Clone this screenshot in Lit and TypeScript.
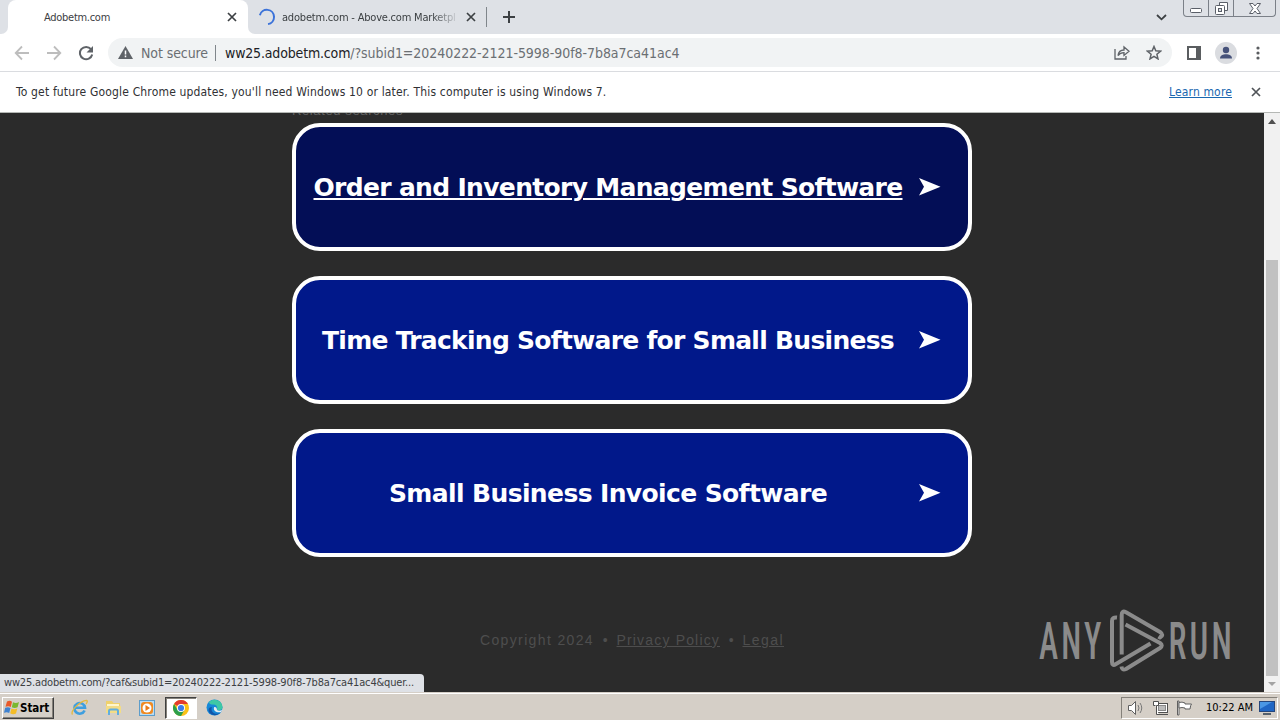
import { LitElement, html, css } from "lit";
import { customElement } from "lit/decorators.js";

const cross = html`<svg width="10" height="10" viewBox="0 0 10 10"><path d="M1 1l8 8M9 1l-8 8" fill="none" stroke="currentColor" stroke-width="1.7"/></svg>`;

const linkCard = (cls: string, text: string) => html`
  <a class="card ${cls}"><span class="label"><span class="l-${cls}">${text}</span></span>
    <svg class="arrow" width="22" height="18" viewBox="0 0 22 18"><path d="M0 0L21.500 8.700 0 17.500 5 8.700z" fill="#fff"/></svg>
  </a>`;

@customElement("app-root")
export class AppRoot extends LitElement {
  static styles = css`
    :host { display: flex; flex-direction: column; width: 1280px; height: 720px; overflow: hidden; position: relative;
      font-family: "DejaVu Sans Condensed", "DejaVu Sans", sans-serif; font-stretch: condensed; color: #3c4043; background: #fff; white-space: nowrap; }
    * { box-sizing: border-box; }
    svg { display: block; flex: none; }
    .tabs { height: 34px; flex: none; display: flex; background: #dee1e6; font-size: 11px; }
    .lead { width: 8px; background: #fff; }
    .lead i { display: block; width: 8px; height: 34px; background: #dee1e6; border-bottom-right-radius: 7px; }
    .tab { display: flex; align-items: center; height: 34px; }
    .tab.on { width: 240px; background: #fff; border-radius: 8px 8px 0 0; padding: 0 11px 0 36px; justify-content: space-between; }
    .t1 { letter-spacing: -.281px; } .t2 { letter-spacing: -.2px; }
    .trail { width: 8px; background: #fff; }
    .trail i { display: block; width: 8px; height: 34px; background: #dee1e6; border-bottom-left-radius: 7px; }
    .tab.off { width: 230px; padding: 0 10px 0 2px; gap: 6px; }
    .clip { width: 178px; overflow: hidden; -webkit-mask-image: linear-gradient(90deg, #000 150px, transparent 178px); }
    .tab.off .x { margin-left: auto; }
    .sep { width: 1px; height: 20px; margin: 7px 16px 0 0; background: #80868b; }
    .plus { margin-top: 11px; }
    .chev { margin: 14px 16px 0 auto; }
    .winbtns { display: flex; width: 93px; height: 17px; margin-right: 4px; border: 1px solid #7b8088; border-top: 0; border-radius: 0 0 4px 4px; }
    .winbtns span { display: flex; justify-content: center; align-items: center; border-right: 1px solid #7b8088; }
    .w1 { width: 25px; } .w2 { width: 25px; }
    .winbtns .w3 { flex: 1; border: 0; }
    .bar { height: 38px; flex: none; display: flex; align-items: center; border-bottom: 1px solid #dadce0; padding: 0 14px; }
    .reload { margin-left: 16px; }
    .fwd { margin-left: 16px; }
    .omni { display: flex; align-items: center; width: 1064px; height: 29px; margin-left: 14px; border-radius: 15px; background: #f1f3f4; font-size: 14px; padding: 0 10px; }
    .omni .warn { margin-right: 8px; }
    .ns { color: #6b6f73; letter-spacing: -.091px; }
    .vline { width: 1px; height: 16px; background: #80868b; margin: 0 9px 0 7px; }
    .host { color: #202124; letter-spacing: -.165px; } .path { color: #6b6f73; letter-spacing: -.05px; }
    .share { margin-left: auto; margin-right: 16px; }
    .side { margin-left: 15px; }
    .me { margin-left: 14px; }
    .dots { margin-left: 19px; }
    .info { height: 41px; flex: none; display: flex; align-items: center; padding: 0 19px 0 16px; border-bottom: 1px solid #b5b8b5; font-size: 12px; color: #303134; }
    .i1 { letter-spacing: .164px; }
    .more { color: #1967b0; text-decoration: underline; margin-left: auto; margin-right: 19px; letter-spacing: .15px; }
    .info svg { color: #505458; }
    .page { flex: 1; min-height: 0; display: flex; background: #2b2b2b; overflow: hidden; }
    .body { width: 1264px; display: flex; flex-direction: column; align-items: center; overflow: hidden; }
    .rel { width: 680px; height: 10px; flex: none; font: 13px/15px "Liberation Sans", sans-serif; letter-spacing: .614px; color: #626262; display: flex; align-items: flex-end; padding-bottom: 5px; }
    .card { display: flex; align-items: center; width: 680px; height: 128px; flex: none; margin-bottom: 25px; border: 4px solid #fff; border-radius: 28px; background: #01188a; color: #fff; padding: 0 27px 0 0; }
    .label { flex: 1; text-align: center; padding: 1px 0 0 1px; font: bold 25px/32px "DejaVu Sans", sans-serif; font-stretch: normal; }
    .arrow { margin-bottom: 1px; }
    .c1 { background: #030e56; }
    .l-c1 { text-decoration: underline; text-decoration-thickness: 2px; text-underline-offset: 2px; letter-spacing: -.675px; }
    .l-c2 { letter-spacing: -.729px; } .l-c3 { letter-spacing: -.618px; }
    .foot { width: 304px; display: flex; justify-content: space-between; margin-top: 48px; font: 14px/20px "Liberation Sans", sans-serif; color: #4e4e4e; }
    .f1 { letter-spacing: 1.36px; } .f2 { letter-spacing: 1.169px; } .f3 { letter-spacing: 1.447px; }
    .scroll { width: 16px; background: #f1f1f1; display: flex; flex-direction: column; align-items: center; padding: 6px 0; }
    .thumb { width: 12px; height: 416px; background: #c1c1c1; margin-top: 136px; }
    .scroll .dn { margin-top: 6px; }
    .status { position: absolute; left: 0; top: 674px; width: 424px; height: 18px; background: #dee1e6; border-top-right-radius: 4px; padding-left: 4px; font-size: 11px; line-height: 18px; letter-spacing: -.171px; }
    .mark { position: absolute; left: 1036px; top: 606px; }
    .task { height: 28px; flex: none; display: flex; align-items: center; background: #d5cfc7; border-top: 1px solid #d5cfc7; box-shadow: inset 0 1px #fff; padding: 2px 2px 0; font-size: 11px; color: #000; }
    .start { display: flex; align-items: center; width: 52px; height: 22px; border: 1px solid; border-color: #fff #404040 #404040 #fff; box-shadow: inset -1px -1px #85817a; padding-left: 1px; font: bold 11.5px "DejaVu Sans Condensed", sans-serif; font-stretch: condensed; letter-spacing: -.05px; }
    .ie { margin-left: 17px; } .ex { margin-left: 17px; } .wm { margin-left: 17px; }
    .chrome { display: flex; justify-content: center; align-items: center; width: 32px; height: 22px; margin-left: 10px; background: #fff; border: 1px solid; border-color: #404040 #fff #fff #404040; box-shadow: inset 1px 1px #85817a; }
    .edge { margin-left: 9px; }
    .tray { display: flex; align-items: center; width: 157px; height: 22px; margin-left: auto; border: 1px solid; border-color: #85817a #fff #fff #85817a; padding: 0 2px 0 5px; }
    .tray svg + svg { margin-left: 7px; }
    .clock { margin-left: auto; margin-right: 6px; }
  `;

  render() {
    return html`
    <div class="tabs">
      <div class="lead"><i></i></div>
      <div class="tab on"><span class="t1">Adobetm.com</span>${cross}</div>
      <div class="trail"><i></i></div>
      <div class="tab off">
        <svg width="18" height="18" viewBox="0 0 18 18"><path d="M2.200 6.200A7.200 7.200 0 1 1 9 16.200" transform="rotate(-8 9 9)" fill="none" stroke="#3b72d9" stroke-width="2"/></svg>
        <div class="clip"><span class="t2">adobetm.com - Above.com Marketpl</span></div><span class="x">${cross}</span>
      </div>
      <i class="sep"></i>
      <svg class="plus" width="12" height="12" viewBox="0 0 12 12"><path d="M6 0v12M0 6h12" stroke="#3c4043" stroke-width="2"/></svg>
      <svg class="chev" width="11" height="7" viewBox="0 0 11 7"><path d="M1 1l4.500 4.300L10 1" fill="none" stroke="#3c4043" stroke-width="1.800"/></svg>
      <div class="winbtns">
        <span class="w1"><svg width="12" height="12" viewBox="0 0 12 12"><rect x=".5" y="6.500" width="11" height="4" rx="1" fill="#fff" stroke="#5a5f68"/></svg></span>
        <span class="w2"><svg width="13" height="13" viewBox="0 0 13 13"><path d="M4.500 3.500v-3h8v8h-3" fill="#fff" stroke="#5a5f68"/><rect x=".5" y="3.500" width="9" height="9" rx="1" fill="#fff" stroke="#5a5f68"/><rect x="3.500" y="6.500" width="3" height="3" fill="#dee1e6" stroke="#5a5f68"/></svg></span>
        <span class="w3"><svg width="12" height="11" viewBox="0 0 12 11"><path d="M.5 .5h3.500L6 3 8 .5h3.500L8 5.500l3.500 5H8L6 8l-2 2.500H.5L4 5.500z" fill="#fff" stroke="#5a5f68"/></svg></span>
      </div>
    </div>
    <div class="bar">
      <svg width="16" height="16" viewBox="0 0 16 16"><path d="M15 8H2M8 1.500L1.700 8 8 14.500" fill="none" stroke="#bdbdbd" stroke-width="1.800"/></svg>
      <svg class="fwd" width="16" height="16" viewBox="0 0 16 16"><path d="M1 8h13M8 1.500L14.300 8 8 14.500" fill="none" stroke="#bdbdbd" stroke-width="1.800"/></svg>
      <svg class="reload" width="16" height="16" viewBox="0 0 16 16"><path d="M13 4.200A6.200 6.200 0 1 0 14.200 9.500" fill="none" stroke="#5f6368" stroke-width="2"/><path d="M15 1v6.500H8.500z" fill="#5f6368"/></svg>
      <div class="omni">
        <svg class="warn" width="15" height="13" viewBox="0 0 15 13"><path d="M7.500 0L15 13H0z" fill="#5f6368"/><path d="M7.500 4.500v4M7.500 9.500v1.700" stroke="#fff" stroke-width="1.500"/></svg>
        <span class="ns">Not secure</span><i class="vline"></i><span class="host">ww25.adobetm.com</span><span class="path">/?subid1=20240222-2121-5998-90f8-7b8a7ca41ac4</span>
        <svg class="share" width="16" height="15" viewBox="0 0 16 15"><path d="M1 4v10h11v-3" fill="none" stroke="#5f6368" stroke-width="1.300"/><path d="M4 10.500C4.500 6.500 7 5 10 5V2l5 4.200L10 10.400V7.600C7.500 7.600 5.500 8.400 4 10.500z" fill="none" stroke="#5f6368" stroke-width="1.300"/></svg>
        <svg width="16" height="15" viewBox="0 0 16 15"><path d="M8 1.500l1.800 4.300 4.700.4-3.600 3.100 1.100 4.600L8 11.400l-4 2.500 1.100-4.600L1.500 6.200l4.700-.4z" fill="none" stroke="#5f6368" stroke-width="1.500"/></svg>
      </div>
      <svg class="side" width="14" height="14" viewBox="0 0 14 14"><rect x="1" y="1" width="12" height="12" fill="#fff" stroke="#5a5d60" stroke-width="2"/><path d="M9 1h4v12H9z" fill="#5a5d60"/></svg>
      <svg class="me" width="22" height="22" viewBox="0 0 22 22"><circle cx="11" cy="11" r="11" fill="#dadce0"/><circle cx="11" cy="8" r="3.200" fill="#46527a"/><path d="M5 16.500c0-3 3-4.300 6-4.300s6 1.300 6 4.300z" fill="#46527a"/></svg>
      <svg class="dots" width="4" height="14" viewBox="0 0 4 14"><g fill="#5a5d60"><circle cx="2" cy="2" r="1.600"/><circle cx="2" cy="7" r="1.600"/><circle cx="2" cy="12" r="1.600"/></g></svg>
    </div>
    <div class="info"><span class="i1">To get future Google Chrome updates, you'll need Windows 10 or later. This computer is using Windows 7.</span><a class="more">Learn more</a>${cross}</div>
    <div class="page">
      <div class="body">
        <div class="rel"><span>Related searches</span></div>
        ${linkCard("c1", "Order and Inventory Management Software")}
        ${linkCard("c2", "Time Tracking Software for Small Business")}
        ${linkCard("c3", "Small Business Invoice Software")}
        <div class="foot"><span class="f1">Copyright 2024</span><span>•</span><u class="f2">Privacy Policy</u><span>•</span><u class="f3">Legal</u></div>
      </div>
      <div class="scroll">
        <svg width="8" height="5" viewBox="0 0 8 5"><path d="M0 5l4-5 4 5z" fill="#505050"/></svg>
        <div class="thumb"></div>
        <svg class="dn" width="8" height="4" viewBox="0 0 8 4"><path d="M0 0l4 4 4-4z" fill="#a3a3a3"/></svg>
      </div>
    </div>
    <div class="status">ww25.adobetm.com/?caf&amp;subid1=20240222-2121-5998-90f8-7b8a7ca41ac4&amp;quer...</div>
    <svg class="mark" width="220" height="80" viewBox="0 0 220 80">
      <g fill="#8b8b8b" font-family="Roboto, sans-serif" font-weight="500" font-size="51.500" letter-spacing="5">
        <text x="3" y="53" textLength="65.500" lengthAdjust="spacingAndGlyphs">ANY</text>
        <text x="132.500" y="53" textLength="66.500" lengthAdjust="spacingAndGlyphs">RUN</text>
      </g>
      <g fill="none" stroke="#8b8b8b" stroke-width="4" stroke-linejoin="round">
        <path d="M81 11.500Q76 11 76 15V56Q76 60.500 80 58L114.500 37.500"/>
        <path d="M85.700 48.500V9Q85.700 4 90 6.300L124 26Q128.500 29 124 31.500L122.500 30.500"/>
        <path d="M89.500 18.500L124 37Q127.500 39.500 124 42L90 63Q86 65 85.500 60.500"/>
      </g>
    </svg>
    <div class="task">
      <div class="start">
        <svg width="16" height="15" viewBox="0 0 16 15"><path d="M3 1.500q3-1.500 5 .3L6.800 7Q4.500 5.500 1.500 6.800z" fill="#e8592a"/><path d="M9 2.300q3 1.500 6-.3L13.600 7.300q-3 1.500-5.800 0z" fill="#7ab82f"/><path d="M1.200 7.800q3-1.400 5.300.3L5.200 13Q3 11.500 0 12.800z" fill="#3f82d0"/><path d="M7.500 8.500q3 1.500 5.800 0L12 13.500q-3 1.500-5.800-.2z" fill="#f5bd27"/></svg><span>Start</span>
      </div>
      <svg class="ie" width="17" height="17" viewBox="0 0 17 17"><path d="M13.600 11.500A5.300 5.300 0 1 1 14 8.700H4" fill="none" stroke="#3f9fdf" stroke-width="2.600"/><path d="M1.500 15.500C-1 12 9 2 15.500 1.300 17 1.800 16 4 15 5" fill="none" stroke="#e5b93c" stroke-width="1.300"/></svg>
      <svg class="ex" width="17" height="17" viewBox="0 0 17 17"><path d="M1 2h6l1.500 2H15v9H1z" fill="#efd16c"/><path d="M2 5h12v5H2z" fill="#fff6cc"/><path d="M1 7h15v7H1z" fill="#f3dc86"/><path d="M4 16v-4q0-1.500 1.500-1.500h6q1.500 0 1.500 1.500v4" fill="none" stroke="#62aede" stroke-width="2"/></svg>
      <svg class="wm" width="16" height="16" viewBox="0 0 16 16"><rect x=".5" y=".5" width="15" height="15" fill="#b9dcf3" stroke="#5d9dcb"/><rect x="2" y="2" width="12" height="12" rx="3" fill="#f08a22"/><circle cx="8" cy="8" r="4.500" fill="#fff"/><path d="M6.500 5L11 8l-4.500 3z" fill="#e87a18"/></svg>
      <div class="chrome"><svg width="16" height="16" viewBox="0 0 16 16"><circle cx="8" cy="8" r="8" fill="#fbc116"/><path d="M8 8L1.070 4A8 8 0 0 1 14.930 4H8z" fill="#e33b2e"/><path d="M1.070 4A8 8 0 0 0 8 16L11.460 10 8 8 4.540 10z" fill="#2c9f4b"/><circle cx="8" cy="8" r="4" fill="#fff"/><circle cx="8" cy="8" r="3.100" fill="#3d7de8"/></svg></div>
      <svg class="edge" width="17" height="17" viewBox="0 0 17 17"><circle cx="8.500" cy="8.500" r="8" fill="#1688d8"/><path d="M3 3A8 8 0 0 1 16.500 8c.3 3-3 4-5.500 3 1-3-.5-5.500-4-5.500C5 5.500 3 5 3 3z" fill="#3ec8a5"/><path d="M6 8c-2 5 3 8 8 6C10 18 3 16 2.500 11 2.500 9 4 8 6 8z" fill="#1255a8"/><path d="M8 8.500c1-1 3 0 3 2.500 1 1 3 1 5.500 0L15 13c-4 1-8-1-7-4.500z" fill="#e6eef2"/></svg>
      <div class="tray">
        <svg width="18" height="16" viewBox="0 0 18 16"><path d="M1.500 5.500h3L8.500 1.500v13L4.500 10.500h-3z" fill="#fff" stroke="#606060"/><path d="M11 5q2 3 0 6M13 3q3.500 5 0 10" fill="none" stroke="#777"/></svg>
        <svg width="17" height="16" viewBox="0 0 17 16"><rect x="4.500" y="3.500" width="11" height="9" fill="#fff" stroke="#505050"/><rect x="6.500" y="5.500" width="7" height="5" fill="#bbb" stroke="#888"/><path d="M7 14.500h9" stroke="#505050"/><path d="M1.500 1.500h5v4h-2v9H7M3.500 5.500h-2v-4" fill="#fff" stroke="#505050"/></svg>
        <svg width="17" height="16" viewBox="0 0 17 16"><path d="M1.500 1h1.500v14H1.500z" fill="#fff" stroke="#606060"/><path d="M3 2.500q3-1 6 .5v1h6.500q-1 1-1.500 5H9V8Q6 7 3 8z" fill="#fff" stroke="#606060"/></svg>
        <span class="clock">10:22 AM</span>
        <svg width="16" height="14" viewBox="0 0 16 14"><rect x=".5" y=".5" width="15" height="10" fill="#1f66c4" stroke="#24467c"/><path d="M1 1h12L1 8z" fill="#4a97e4"/><path d="M4 13h8" stroke="#55606c" stroke-width="2"/></svg>
      </div>
    </div>`;
  }
}
